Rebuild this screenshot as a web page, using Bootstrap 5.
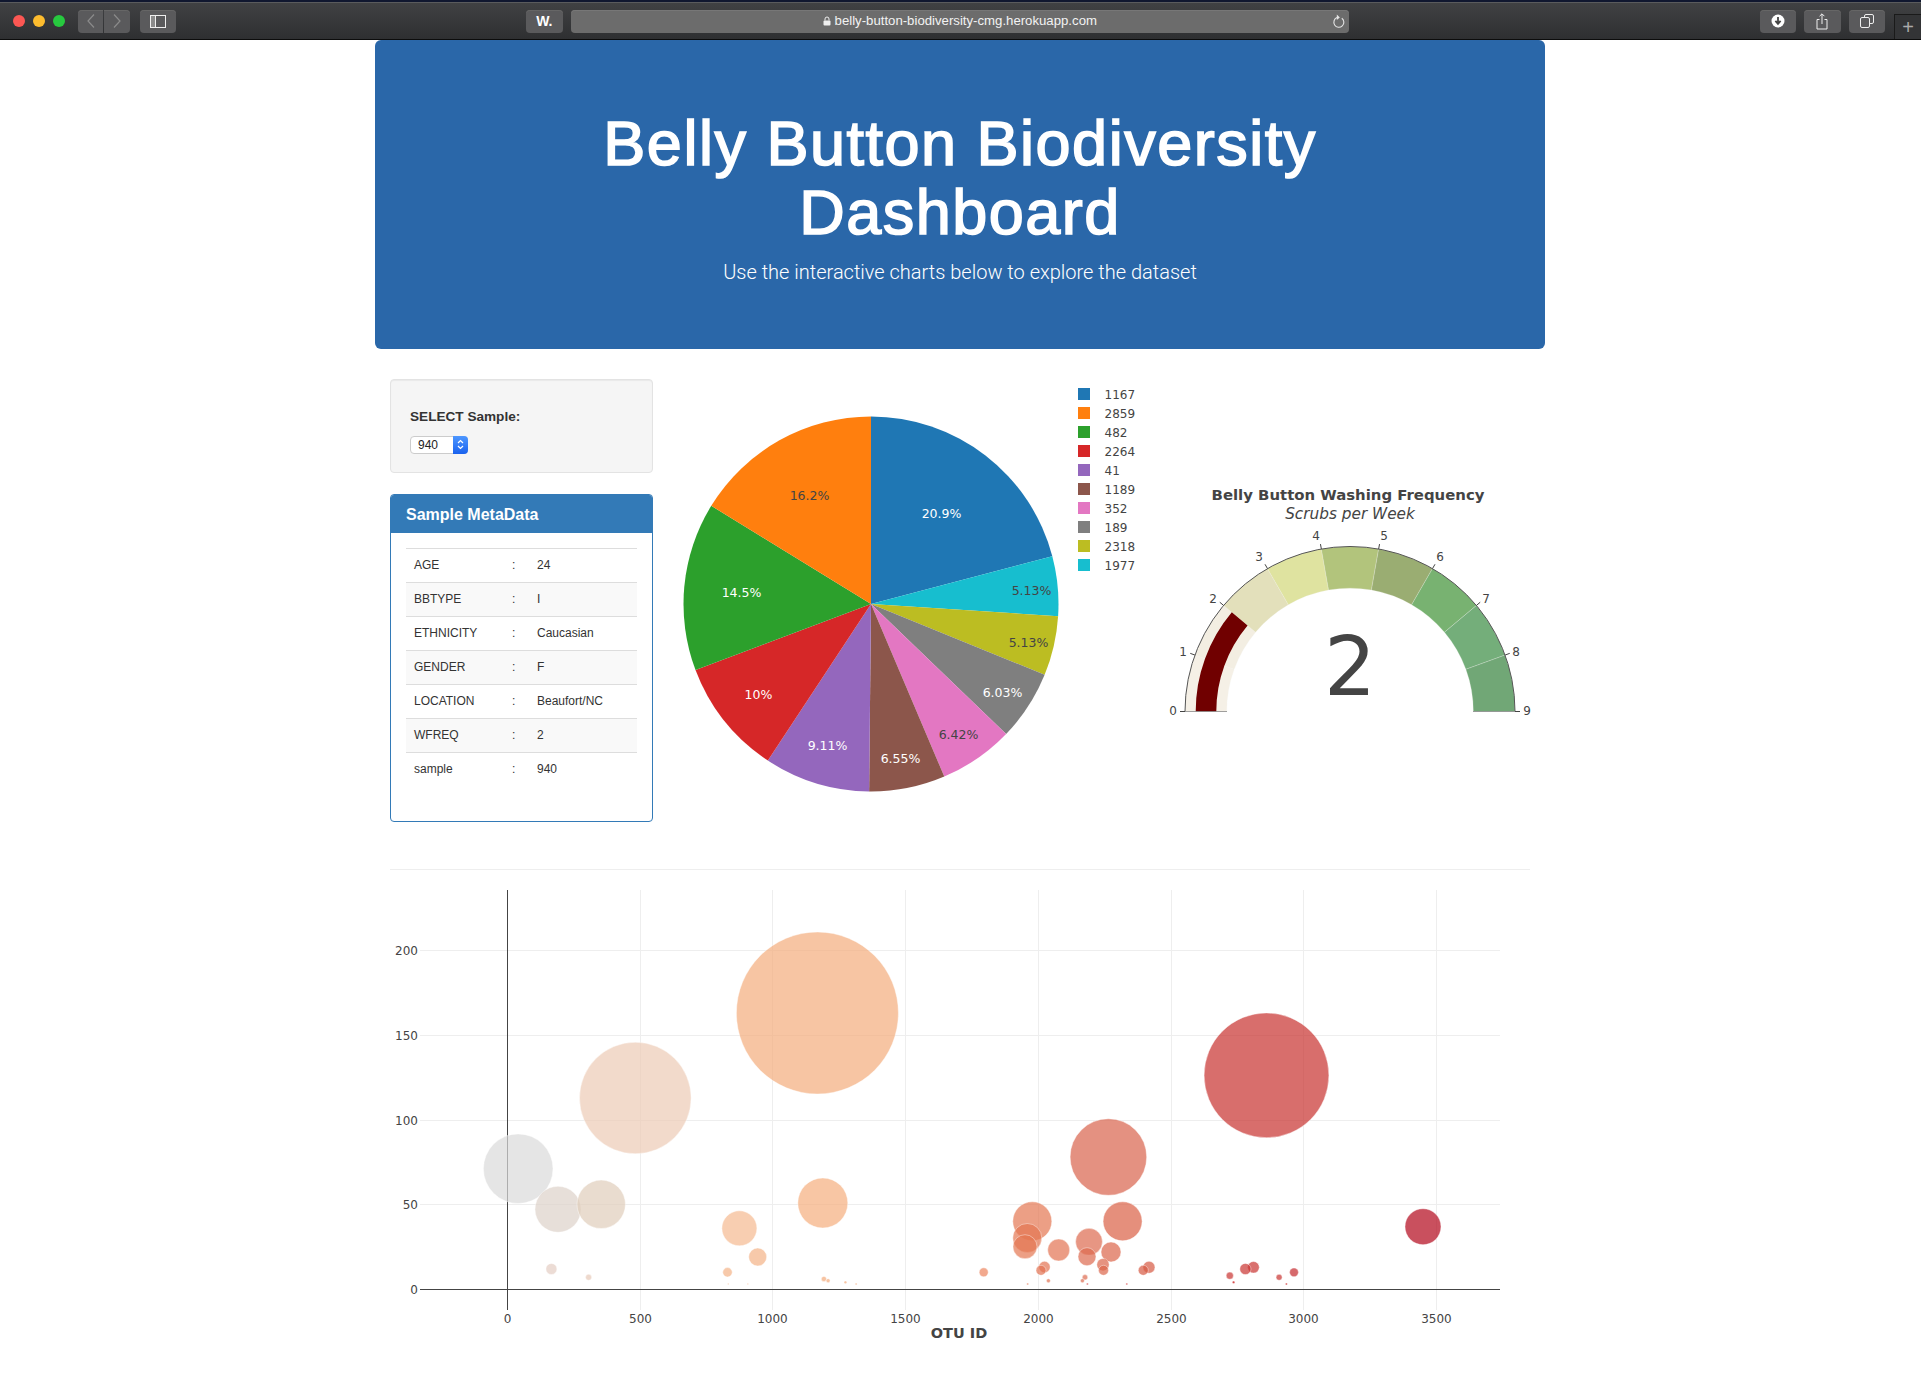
<!DOCTYPE html>
<html lang="en">

<head>
    <meta charset="UTF-8">
    <meta name="viewport" content="width=device-width, initial-scale=1.0">
    <title>Belly Button Biodiversity Dashboard</title>

    <!-- Bootstrap CSS -->
    <link href="https://cdn.jsdelivr.net/npm/bootstrap@5.3.0/dist/css/bootstrap.min.css" rel="stylesheet">
    <style>
        body { font-family: "Liberation Sans", Arial, sans-serif; font-size: 14px; line-height: 1.42857; color: #333; background: #fff; }

        /* safari window bar */
        .mac-bar { height: 40px; background: linear-gradient(#414244, #2e2f31); border-top: 2px solid #10172f; border-bottom: 1px solid #0c0c0c; box-shadow: inset 0 1px 0 #5a5b5d; padding-top: 1px; padding-left: 13px; }
        .mac-dot { width: 12px; height: 12px; border-radius: 50%; margin-right: 8px; }
        .mac-btn { height: 23px; background: #5a5a5c; border-radius: 4px; color: #ddd; box-shadow: inset 0 1px 0 #666; }
        .mac-back { width: 25.5px; margin-left: 5px; border-radius: 4px 0 0 4px; }
        .mac-fwd { width: 25.5px; margin-left: 1px; margin-right: 10px; border-radius: 0 4px 4px 0; }
        .mac-side { width: 36px; }
        .mac-w { width: 37px; margin-left: 350px; margin-right: 8px; font: bold 14px "Liberation Sans", sans-serif; color: #fff; }
        .mac-url { width: 779px; height: 23px; background: #6c6c6c; border-radius: 4px; color: #f2f2f2; font-size: 13.2px; box-shadow: inset 0 1px 0 #777; }
        .mac-reload { right: 3px; top: 4px; }
        .mac-right { width: 36.5px; margin-right: 8px; }
        .mac-first { margin-left: 411px; }
        .mac-plus { width: 27px; height: 25px; margin-left: 1px; background: #333436; border-left: 1px solid #1a1a1a; border-top: 1px solid #1a1a1a; align-self: flex-end; color: #aaa; font-size: 20px; line-height: 1; }

        .dash-wrap { width: 1170px; margin-left: 375px; }
        .hero-box { background: #2a67a9; color: #fff; border-radius: 6px; padding: 48px 100px 47px; margin-bottom: 30px; text-align: center; }
        .hero-box h1 { font-family: "Liberation Sans", Arial, sans-serif; font-size: 63px; font-weight: 500; line-height: 1.1; letter-spacing: 1.5px; margin: 21px 0 9px; -webkit-text-stroke: 1.6px #fff; }
        .hero-box p { font-family: Roboto, "Liberation Sans", sans-serif; font-size: 20px; font-weight: 300; line-height: 30px; margin: 0 0 15px; }

        .gut-row { --bs-gutter-x: 30px; }
        .select-well { background: #f5f5f5; border: 1px solid #e3e3e3; border-radius: 4px; box-shadow: inset 0 1px 1px rgba(0,0,0,.05); padding: 19px; height: 94px; margin-bottom: 21px; }
        .select-well h5 { font-size: 13.6px; font-weight: 700; line-height: 1.1; margin: 11px 0 11px; color: #333; }
        .select-box { width: 58px; height: 18px; }
        .select-box select { width: 100%; height: 100%; appearance: none; background: #fff; border: 1px solid #ccc; border-radius: 4px; font: 12px "Liberation Sans", sans-serif; color: #222; padding: 0 0 0 7px; display: block; }
        .select-arrow { right: 0; top: 0; width: 15px; height: 18px; background: linear-gradient(#4d97ff, #1a62ee); border-radius: 0 4px 4px 0; }

        .meta-panel { border: 1px solid #337ab7; border-radius: 4px; margin-bottom: 20px; height: 328px; }
        .meta-head { background: #337ab7; color: #fff; padding: 11px 15px 9px; height: 38px; font-size: 16px; font-weight: 700; line-height: 18px; border-radius: 3px 3px 0 0; }
        .meta-body { padding: 15px; }
        .meta-table { width: 231px; table-layout: fixed; margin: 0; }
        .meta-table td { padding: 8px; font-size: 12px; line-height: 17.14px; color: #333; border-top: 1px solid #ddd; border-bottom: 0; height: 34.14px; }
        .meta-table tr:nth-child(even) td { background: #f9f9f9; }
        .meta-table .c-key { width: 98px; }
        .meta-table .c-sep { width: 25px; }

        .chart-svg { display: block; font-family: "DejaVu Sans", Verdana, sans-serif; fill: #444; }
        .chart-rule { margin: 27px 15px 10px; border: 0; border-top: 1px solid #eee; opacity: 1; }
        .pie-label { font-size: 12.5px; text-anchor: middle; dominant-baseline: central; }
        .legend-label { font-size: 12px; dominant-baseline: central; }
        .tick-label { font-size: 12px; dominant-baseline: central; }
    </style>
</head>

<body>

    <div class="mac-bar d-flex align-items-center pe-0">
        <span class="mac-dot" style="background:#fc5753"></span>
        <span class="mac-dot" style="background:#fdbc2e"></span>
        <span class="mac-dot" style="background:#27c93f"></span>
        <span class="mac-btn mac-back d-flex align-items-center justify-content-center">
            <svg width="10" height="16" viewBox="0 0 10 16"><path d="M8 1.5 2 8l6 6.5" fill="none" stroke="#8b8b8b" stroke-width="1.2"/></svg>
        </span>
        <span class="mac-btn mac-fwd d-flex align-items-center justify-content-center">
            <svg width="10" height="16" viewBox="0 0 10 16"><path d="M2 1.5 8 8l-6 6.5" fill="none" stroke="#8b8b8b" stroke-width="1.2"/></svg>
        </span>
        <span class="mac-btn mac-side d-flex align-items-center justify-content-center">
            <svg width="16" height="13" viewBox="0 0 16 13"><rect x=".5" y=".5" width="15" height="12" fill="none" stroke="#eee"/><rect x="1" y="1" width="4" height="11" fill="#8a8a8a"/><path d="M5.5 1v11" stroke="#eee"/></svg>
        </span>
        <span class="mac-btn mac-w d-flex align-items-center justify-content-center">W.</span>
        <div class="mac-url position-relative d-flex align-items-center justify-content-center">
            <svg class="me-1" width="8" height="10" viewBox="0 0 8 10"><path d="M2 4.5V3a2 2 0 0 1 4 0v1.5" fill="none" stroke="#eee" stroke-width="1"/><rect x=".5" y="4.5" width="7" height="5" rx="1" fill="#eee"/></svg>
            <span>belly-button-biodiversity-cmg.herokuapp.com</span>
            <svg class="mac-reload position-absolute" width="14" height="15" viewBox="0 0 14 15"><path d="M9.8 4.2A5 5 0 1 1 5 3.6" fill="none" stroke="#e4e4e4" stroke-width="1.1"/><path d="M4.8 .6l3 2.8-3 2.6z" fill="#e4e4e4"/></svg>
        </div>
        <span class="mac-btn mac-right mac-first d-flex align-items-center justify-content-center">
            <svg width="14" height="14" viewBox="0 0 14 14"><circle cx="7" cy="7" r="6.5" fill="#fff"/><path d="M7 3v6M4.4 6.8 7 9.8l2.6-3" fill="none" stroke="#444" stroke-width="1.8"/></svg>
        </span>
        <span class="mac-btn mac-right d-flex align-items-center justify-content-center">
            <svg width="12" height="17" viewBox="0 0 12 17"><path d="M3.5 6.5H1v9.5h10V6.5H8.5" fill="none" stroke="#eee"/><path d="M6 11V1M3.6 3.2 6 .8l2.4 2.4" fill="none" stroke="#eee"/></svg>
        </span>
        <span class="mac-btn mac-right d-flex align-items-center justify-content-center">
            <svg width="14" height="14" viewBox="0 0 14 14"><rect x="4.5" y=".5" width="9" height="9" rx="1.5" fill="none" stroke="#eee"/><rect x=".5" y="3.5" width="9" height="10" rx="1.5" fill="#5a5a5c" stroke="#eee"/></svg>
        </span>
        <span class="mac-plus d-flex align-items-center justify-content-center">+</span>
    </div>

    <div class="dash-wrap">
        <div class="hero-box">
            <h1>Belly Button Biodiversity Dashboard</h1>
            <p>Use the interactive charts below to explore the dataset</p>
        </div>

        <div class="row mx-0 gut-row">
            <div class="col-3">
                <div class="select-well">
                    <h5>SELECT Sample:</h5>
                    <div class="select-box position-relative">
                        <select id="selDataset">
                            <option>940</option>
                        </select>
                        <span class="select-arrow position-absolute d-flex align-items-center justify-content-center">
                            <svg width="7" height="11" viewBox="0 0 7 11"><path d="M1 4 3.5 1.5 6 4M1 7l2.5 2.5L6 7" fill="none" stroke="#fff" stroke-width="1.2"/></svg>
                        </span>
                    </div>
                </div>
                <div class="meta-panel">
                    <div class="meta-head">Sample MetaData</div>
                    <div class="meta-body">
                        <table class="table meta-table">
                            <tbody id="sample-metadata"></tbody>
                        </table>
                    </div>
                </div>
            </div>
            <div class="col-5 px-0">
                <svg id="pie" class="chart-svg" width="487.5" height="463" viewBox="667.5 379 487.5 463"></svg>
            </div>
            <div class="col-4 px-0">
                <svg id="gauge" class="chart-svg" width="390" height="463" viewBox="1155 379 390 463"></svg>
            </div>
        </div>

        <hr class="chart-rule">
        <svg id="bubble" class="chart-svg mx-auto" width="1140" height="470" viewBox="390 880 1140 470"></svg>
    </div>

    <!-- Bootstrap JS -->
    <script src="https://cdn.jsdelivr.net/npm/bootstrap@5.3.0/dist/js/bootstrap.bundle.min.js"></script>

    <script>
        // Metadata table
        const metadata = [["AGE", "24"], ["BBTYPE", "I"], ["ETHNICITY", "Caucasian"], ["GENDER", "F"], ["LOCATION", "Beaufort/NC"], ["WFREQ", "2"], ["sample", "940"]];
        document.getElementById("sample-metadata").innerHTML = metadata.map(([k, v]) =>
            `<tr><td class="c-key">${k}</td><td class="c-sep">:</td><td>${v}</td></tr>`).join("");

        function txt(x, y, s, cls, extra) {
            return `<text x="${x}" y="${y}" class="${cls}" ${extra || ""}>${s}</text>`;
        }

        // Pie chart
        const slices = [
            [20.9, "#1f77b4", "20.9%", 941, 513, "#fff"],
            [5.13, "#17becf", "5.13%", 1031, 590, "#444"],
            [5.13, "#bcbd22", "5.13%", 1028, 642, "#444"],
            [6.03, "#7f7f7f", "6.03%", 1002, 692, "#fff"],
            [6.42, "#e377c2", "6.42%", 958, 734, "#444"],
            [6.55, "#8c564b", "6.55%", 900, 758, "#fff"],
            [9.11, "#9467bd", "9.11%", 827, 745, "#fff"],
            [10, "#d62728", "10%", 758, 694, "#fff"],
            [14.5, "#2ca02c", "14.5%", 741, 592, "#fff"],
            [16.23, "#ff7f0e", "16.2%", 809, 495, "#444"]
        ];
        const pieX = 870.5, pieY = 604, pieR = 187.5;
        let pieHtml = "", start = 0;
        slices.forEach(s => {
            const end = start + s[0] * 3.6;
            const a = start * Math.PI / 180, b = end * Math.PI / 180;
            const large = end - start > 180 ? 1 : 0;
            pieHtml += `<path fill="${s[1]}" d="M${pieX} ${pieY}L${pieX + pieR * Math.sin(a)} ${pieY - pieR * Math.cos(a)}A${pieR} ${pieR} 0 ${large} 1 ${pieX + pieR * Math.sin(b)} ${pieY - pieR * Math.cos(b)}Z"/>`;
            start = end;
        });
        slices.forEach(s => { pieHtml += txt(s[3], s[4], s[2], "pie-label", `style="fill:${s[5]}"`); });
        const legend = [["1167", "#1f77b4"], ["2859", "#ff7f0e"], ["482", "#2ca02c"], ["2264", "#d62728"], ["41", "#9467bd"], ["1189", "#8c564b"], ["352", "#e377c2"], ["189", "#7f7f7f"], ["2318", "#bcbd22"], ["1977", "#17becf"]];
        legend.forEach((l, i) => {
            const y = 394 + i * 19;
            pieHtml += `<rect x="1077.5" y="${y - 6}" width="12" height="12" fill="${l[1]}"/>`;
            pieHtml += txt(1104, y + 1, l[0], "legend-label");
        });
        document.getElementById("pie").innerHTML = pieHtml;

        // Gauge chart
        const gX = 1350, gY = 711.5;
        const gp = (t, r) => {
            const th = (180 - 20 * t) * Math.PI / 180;
            return [gX + r * Math.cos(th), gY - r * Math.sin(th)];
        };
        const band = (t0, t1, r0, r1) => {
            const a = gp(t0, r1), b = gp(t1, r1), c = gp(t1, r0), d = gp(t0, r0);
            return `M${a}A${r1} ${r1} 0 0 1 ${b}L${c}A${r0} ${r0} 0 0 0 ${d}Z`;
        };
        const steps = ["#f5f0e6", "#f3eee2", "#e3e0bb", "#dfe3a0", "#b2c47c", "#9aad72", "#78b271", "#74ae7a", "#71a776"];
        let gaugeHtml = "";
        steps.forEach((c, i) => { gaugeHtml += `<path fill="${c}" stroke="#f4f4f0" stroke-width=".25" d="${band(i, i + 1, 123.3, 165)}"/>`; });
        gaugeHtml += `<path fill="#700000" d="${band(0, 2, 133.7, 154.3)}"/>`;
        const o0 = gp(0, 165), o9 = gp(9, 165);
        gaugeHtml += `<path fill="none" stroke="#555" d="M${o0}A165 165 0 0 1 ${o9}"/>`;
        gaugeHtml += `<path stroke="#888" stroke-width=".8" d="M${gp(0, 123)}H${gp(0, 165)[0]}M${gp(9, 123)}H${gp(9, 165)[0]}"/>`;
        const gaugeTicks = [[1173, 711], [1183, 652], [1213, 599], [1259, 557], [1316, 536], [1384, 536], [1440, 557], [1486, 599], [1516, 652], [1527, 711]];
        gaugeTicks.forEach((p, i) => {
            gaugeHtml += `<path stroke="#444" d="M${gp(i, 165)}L${gp(i, 170)}"/>`;
            gaugeHtml += txt(p[0], p[1], i, "tick-label", 'text-anchor="middle"');
        });
        gaugeHtml += txt(1348, 495, "Belly Button Washing Frequency", "", 'text-anchor="middle" dominant-baseline="central" font-size="14.9" font-weight="700"');
        gaugeHtml += txt(1350, 514, "Scrubs per Week", "", 'text-anchor="middle" dominant-baseline="central" font-size="15.3" font-style="italic"');
        gaugeHtml += txt(1350, 695, "2", "", 'text-anchor="middle" font-size="82"');
        document.getElementById("gauge").innerHTML = gaugeHtml;

        // Bubble chart: cx, cy, r, colour as seen on white
        const bubbles = [
            [518.2, 1168.7, 34.8, "#e5e5e5"], [558, 1209.3, 23, "#e7dfd9"], [601.2, 1204.3, 24.2, "#e9dccf"],
            [635.3, 1098, 55.8, "#f2dacb"], [817.4, 1013, 81, "#f7c5a3"], [822.8, 1203, 25, "#f8c6a4"],
            [739.4, 1228.3, 17.5, "#f8ceb1"], [757.7, 1257, 9, "#f7c9aa"], [727.5, 1272.3, 4.7, "#f7c9aa"],
            [551.4, 1269, 5.5, "#ecdcd5"], [588.6, 1277.3, 3, "#eed9cd"], [823.9, 1279, 2.6, "#f7c4a3"],
            [828.1, 1280.7, 2, "#f7c4a3"], [845.4, 1282.3, 1.4, "#f7c4a3"], [856.1, 1284, 1, "#f7c4a3"],
            [728.3, 1284, .7, "#f7c4a3"], [747.8, 1284, .7, "#f7c4a3"],
            [1266.5, 1075.3, 62.4, "#d86f6d"], [1108.4, 1157, 38.3, "#e49281"], [1122.6, 1221.3, 19.5, "#e58f7c"],
            [1032.3, 1221.3, 19.5, "#ec9f85"], [1027.3, 1238, 14.5, "#ec9f85"], [1025, 1246.7, 12, "#ec9f85"],
            [1058.7, 1250, 11, "#eb9c85"], [1089, 1241.7, 13.4, "#e79683"], [1087, 1256.7, 9, "#e79683"],
            [1111, 1252, 10, "#e69380"], [1103, 1264.7, 6.2, "#e69380"], [1103.5, 1270.3, 5, "#e69380"],
            [1044.5, 1267, 5.7, "#eb9c85"], [1041, 1270.3, 5, "#eb9c85"], [983.7, 1272.3, 4.5, "#f2a98e"],
            [1048.4, 1280.7, 2, "#eb9c85"], [1085, 1277.3, 2.7, "#e79683"], [1082.4, 1280.7, 2, "#e79683"],
            [1087.4, 1284, 1, "#e07070"], [1027.7, 1284, 1, "#ec9f85"], [1126.8, 1284, 1, "#e07070"],
            [1149, 1267.3, 6, "#e28a7b"], [1143.3, 1270.3, 5, "#e28a7b"], [1253.5, 1267.3, 5.8, "#d9706f"],
            [1245.4, 1269, 5.6, "#d9706f"], [1229.8, 1275.7, 3.6, "#d9706f"], [1233.6, 1282.3, 1.2, "#d63b3b"],
            [1279.1, 1277.3, 3, "#d9706f"], [1294, 1272.3, 4.4, "#d66a6c"], [1286.4, 1284, 1, "#d63b3b"],
            [1423, 1226.7, 18, "#c9505f"]
        ];
        const bubbleAlpha = 0.7;
        const toBase = hex => {
            const n = parseInt(hex.slice(1), 16);
            const ch = [n >> 16, (n >> 8) & 255, n & 255].map(v => Math.max(0, Math.round((v - 255 * (1 - bubbleAlpha)) / bubbleAlpha)));
            return `rgb(${ch.join(",")})`;
        };
        const xPos = v => Math.round(507 + v * 0.2654) + .5;
        const yPos = v => Math.round(1289 - v * 1.695) + .5;
        let bubbleHtml = "";
        [0, 500, 1000, 1500, 2000, 2500, 3000, 3500].forEach(v => {
            if (v) bubbleHtml += `<path stroke="#eee" d="M${xPos(v)} 890V1310"/>`;
            bubbleHtml += txt(xPos(v), 1319, v, "tick-label", 'text-anchor="middle"');
        });
        [50, 100, 150, 200].forEach(v => { bubbleHtml += `<path stroke="#eee" d="M420 ${yPos(v)}H1500"/>`; });
        [0, 50, 100, 150, 200].forEach(v => { bubbleHtml += txt(418, yPos(v), v, "tick-label", 'text-anchor="end"'); });
        bubbleHtml += `<path stroke="#444" d="M${xPos(0)} 890V1310M420 ${yPos(0)}H1500"/>`;
        bubbles.forEach(b => {
            bubbleHtml += `<circle cx="${b[0]}" cy="${b[1]}" r="${b[2]}" fill="${toBase(b[3])}" fill-opacity="${bubbleAlpha}" stroke="#fff" stroke-opacity=".6" stroke-width=".7"/>`;
        });
        bubbleHtml += txt(959, 1333, "OTU ID", "", 'text-anchor="middle" dominant-baseline="central" font-size="14.5" font-weight="700"');
        document.getElementById("bubble").innerHTML = bubbleHtml;
    </script>

</body>

</html>
